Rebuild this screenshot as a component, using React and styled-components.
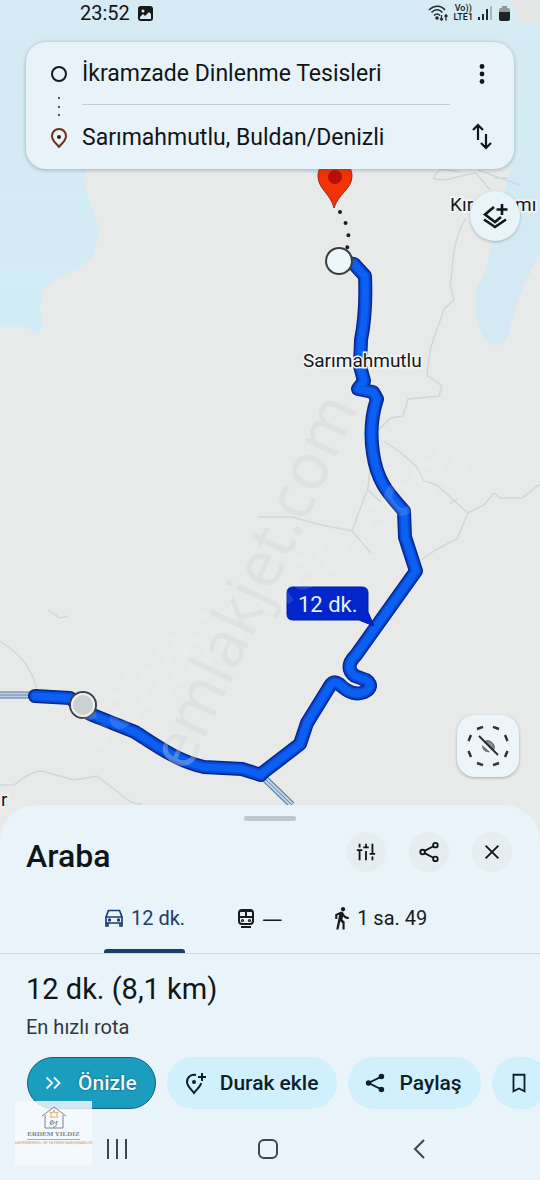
import React from 'react';
import styled, { createGlobalStyle } from 'styled-components';

const GlobalStyle = createGlobalStyle`
  * {
    box-sizing: border-box;
  }

  body {
    margin: 0;
    background: #e8f3fa;
    font-family: Roboto, 'Noto Sans', sans-serif;
    color: #111518;
  }

  button {
    border: 0;
    padding: 0;
    background: none;
    font: inherit;
    color: inherit;
    cursor: pointer;
  }

  h1, h2, p {
    margin: 0;
    font-weight: 400;
  }

  svg {
    display: block;
    flex: none;
  }
`;

const Screen = styled.div`
  display: flex;
  flex-direction: column;
  min-height: 100vh;
  overflow: hidden;
`;

const MapArea = styled.main`
  position: relative;
  flex: 1;
  display: flex;
  flex-direction: column;
  min-height: 600px;
  padding-bottom: 68px;
`;

const MapCanvas = styled.svg`
  position: absolute;
  inset: 0;
  width: 100%;
  height: 100%;
`;

const PlaceLabel = styled.text`
  font-family: Roboto, sans-serif;
  font-size: 19px;
  fill: #16181a;
  stroke: #f4f6f6;
  stroke-width: 3px;
  paint-order: stroke;
`;

const EtaLabel = styled.text`
  font-family: Roboto, sans-serif;
  font-size: 22px;
  fill: #e4f1ff;
`;

const Watermark = styled.text`
  font-family: ${({ $bold }) => ($bold ? "'Open Sans'" : "'Noto Sans'")}, sans-serif;
  font-weight: ${({ $bold }) => ($bold ? 700 : 400)};
  font-size: ${({ $size }) => $size}px;
  fill: ${({ $fill }) => $fill};
`;

const StatusBar = styled.header`
  position: relative;
  display: flex;
  justify-content: space-between;
  align-items: center;
  height: 26px;
  padding: 0 28px 0 80px;
`;

const StatusGroup = styled.div`
  display: flex;
  align-items: center;
  gap: ${({ $gap }) => $gap}px;
  font-size: 20px;
`;

const VolteMark = styled.span`
  display: flex;
  flex-direction: column;
  align-items: center;
  font-size: 9px;
  font-weight: 500;
  line-height: 9px;
`;

const DirectionsCard = styled.section`
  position: relative;
  display: grid;
  grid-template-columns: 18px 1fr 32px;
  grid-template-rows: 63px 64px;
  column-gap: 14px;
  align-items: center;
  margin: 16px 26px 0;
  padding: 0 16px 0 24px;
  height: 127px;
  border-radius: 20px;
  background: #e8f3f9;
  box-shadow: 0 1px 4px rgba(40, 70, 90, 0.35);
`;

const RouteMarks = styled.div`
  grid-row: 1 / 3;
`;

const Place = styled.button`
  align-self: stretch;
  margin-right: 2px;
  text-align: left;
  font-size: 23px;
  border-bottom: ${({ $divided }) => ($divided ? '1px solid #c3cbd0' : '0')};
`;

const CardAction = styled.button`
  display: flex;
  align-items: center;
  justify-content: center;
  height: 40px;
`;

const LayersButton = styled.button`
  position: relative;
  display: flex;
  align-items: center;
  justify-content: center;
  align-self: flex-end;
  width: 50px;
  height: 50px;
  margin: 22px 20px 0 0;
  border-radius: 50%;
  background: #e9f4f9;
  box-shadow: 0 1px 3px rgba(60, 80, 90, 0.35);
`;

const LocateButton = styled.button`
  position: relative;
  display: flex;
  align-items: center;
  justify-content: center;
  align-self: flex-end;
  width: 62px;
  height: 62px;
  margin: auto 21px 0 0;
  border-radius: 18px;
  background: #edf5f9;
  box-shadow: 0 1px 3px rgba(60, 80, 90, 0.4);
`;

const Sheet = styled.section`
  position: relative;
  margin-top: -40px;
  border-radius: 36px 36px 0 0;
  background: #e8f3fa;
`;

const Handle = styled.div`
  width: 52px;
  height: 5px;
  margin: 0 auto;
  border-radius: 2px;
  background: #bfc9cf;
`;

const SheetTop = styled.div`
  padding-top: 11px;
`;

const SheetHeader = styled.header`
  display: flex;
  align-items: center;
  justify-content: space-between;
  height: 62px;
  padding: 0 28px 0 26px;
`;

const SheetTitle = styled.h1`
  padding-top: 8px;
  font-size: 32px;
  line-height: 38px;
  font-weight: 500;
`;

const HeaderActions = styled.div`
  display: flex;
  gap: 23px;
`;

const RoundButton = styled.button`
  display: flex;
  align-items: center;
  justify-content: center;
  width: 40px;
  height: 40px;
  border-radius: 50%;
  background: #e5edf1;
`;

const ModeTabs = styled.nav`
  display: flex;
  gap: 52px;
  height: 71px;
  padding: 0 104px;
  border-bottom: 1px solid #ccd8e0;
`;

const ModeTab = styled.button`
  display: flex;
  flex-direction: column;
  font-size: 20px;
  white-space: nowrap;
  color: ${({ $active }) => ($active ? '#1b3f6b' : '#171b1e')};

  &::after {
    content: '';
    width: 100%;
    height: 4px;
    border-radius: 3px 3px 0 0;
    background: ${({ $active }) => ($active ? '#1a4069' : 'transparent')};
  }
`;

const ModeLabel = styled.span`
  display: flex;
  flex: 1;
  align-items: center;
  gap: 7px;
  padding-top: 4px;
`;

const NoTime = styled.span`
  font-family: 'Noto Sans', sans-serif;
`;

const Summary = styled.div`
  padding: 16px 26px 0;
`;

const Duration = styled.h2`
  font-size: 29px;
  line-height: 38px;
`;

const RouteNote = styled.p`
  margin-top: 6px;
  font-size: 20px;
  line-height: 26px;
  color: #33383c;
`;

const ActionRow = styled.div`
  display: flex;
  gap: 11px;
  margin-top: 17px;
  padding-left: 27px;
  overflow: hidden;
`;

const Pill = styled.button`
  display: flex;
  flex: none;
  align-items: center;
  gap: 13px;
  height: 52px;
  padding: 0 18px 0 15px;
  border: 1px solid ${({ $primary }) => ($primary ? '#155e7c' : 'transparent')};
  border-radius: 26px;
  background: ${({ $primary }) => ($primary ? '#1b9dc0' : '#d0f0fd')};
  color: ${({ $primary }) => ($primary ? '#eefaff' : '#0f1e28')};
  font-size: 21px;
  font-weight: 500;
  text-shadow: ${({ $primary }) => ($primary ? '0 0 2px #0b3c55' : 'none')};
`;

const SystemNav = styled.nav`
  position: relative;
  display: flex;
  justify-content: center;
  gap: 119px;
  height: 71px;
  padding: 24px 4px 0 0;
`;

const NavButton = styled.button`
  display: flex;
  align-items: center;
  justify-content: center;
  width: 32px;
  height: 32px;
  color: #3f4549;
`;

const AgencyBadge = styled.div`
  position: absolute;
  left: 15px;
  bottom: 15px;
  display: flex;
  flex-direction: column;
  align-items: center;
  width: 77px;
  height: 64px;
  padding-top: 5px;
  background: rgba(247, 250, 254, 0.82);
`;

const AgencyName = styled.span`
  font-family: 'Liberation Serif', serif;
  font-size: 7px;
  line-height: 10px;
  font-weight: 700;
  color: #7d858b;
  border-bottom: 1px solid #a8acae;
`;

const AgencyLine = styled.span`
  font-size: 4px;
  line-height: 6px;
  color: #e0936a;
  white-space: nowrap;
`;

const routeNorth =
  'M339 261 L354 264 L365 276 C366 300 364 325 361 340 L360 366 L364 381 L358 389 L373 392 L377 399 C370 420 371 440 373 453 C377 482 389 494 404 511 L405 537 L416 571 L356 655 C347 664 348 671 355 676 L366 680 C374 685 369 691 361 693 C351 695 345 689 339 684 C333 680 331 684 328 689 L307 723 L300 744 L261 774';
const routeSouth = 'M261 775 L242 769 L204 767 C177 761 157 746 135 732 L90 714 L70 698 L35 696';

const RouteMap = () => (
  <MapCanvas viewBox="0 0 540 845" preserveAspectRatio="xMidYMin slice" role="img" aria-label="Rota haritası">
    <defs>
      <linearGradient id="sky" x1="0" y1="0" x2="0" y2="1">
        <stop offset="0" stopColor="#d6ebf3" />
        <stop offset="1" stopColor="#d2ecf5" />
      </linearGradient>
    </defs>
    <rect width="540" height="845" fill="#e8eae9" />
    {/* lakes */}
    <path d="M0 0 H540 V168 H337 C325 178 311 174 299 169 H86 L84 182 L90 202 L100 230 L94 256 L80 268 L54 280 L42 292 L40 308 L43 328 L34 334 L28 327 H0 Z" fill="url(#sky)" />
    <path d="M514 160 H540 V252 C528 279 518 293 511 325 C507 346 498 350 486 341 C477 329 472 304 478 285 C488 272 492 245 496 216 Z" fill="#d3eaf4" />
    <path d="M510 0 H540 V23 H520 Z" fill="#e6e8e8" />
    {/* minor roads */}
    <g fill="none" stroke="#d0d7db" strokeWidth="1.400">
      <path d="M433 178 C445 184 465 173 476 173 L490 190 M433 178 L440 169 L460 172 M494 178 H508 M478 170 L520 185" />
      <path d="M466 218 C450 244 454 268 450 285 L454 300 L444 309 L430 350 L427 375 L442 386 L439 396 L408 399 L403 416 L391 418 L378 430" />
      <path d="M384 441 L400 452 L416 466 L424 481 L437 485 L468 513 L484 505 L494 493 L500 498 L522 498 L540 484" />
      <path d="M468 513 L457 539 L437 549 L421 560 M450 504 L457 499" />
      <path d="M258 517 L292 517 L321 525 L352 531 L368 488 L371 460 M352 531 L371 553 M368 490 L381 502" />
      <path d="M0 641 C23 656 32 669 37 690 M48 610 L60 618 L68 616" />
      <path d="M0 785 H14 C25 776 35 771 42 771 L74 780 L97 776 L119 793 C129 802 134 804 142 804" />
    </g>
    <g fill="none">
      <path d="M0 695 H36 M261 775 L292 805" stroke="#5c7594" strokeWidth="7" />
      <path d="M0 695 H36 M261 775 L292 805" stroke="#b8d0e8" strokeWidth="5" />
      <path d="M0 695 H36 M261 775 L292 805" stroke="#6f89a5" strokeWidth="1" />
    </g>
    {/* route */}
    <g fill="none" strokeLinejoin="round" strokeLinecap="round">
      <path d={routeSouth} stroke="#06268c" strokeWidth="14" />
      <path d={routeNorth} stroke="#06268c" strokeWidth="14" />
      <path d={routeSouth} stroke="#084bd6" strokeWidth="11" />
      <path d={routeNorth} stroke="#084bd6" strokeWidth="11" />
      <path d={routeSouth} stroke="#0b60f2" strokeWidth="7" />
      <path d={routeNorth} stroke="#0b60f2" strokeWidth="7" />
    </g>
    <path d="M340 212 L346 224 L349 238 L347 249" fill="none" stroke="#1b1d1f" strokeWidth="4" strokeLinecap="round" strokeDasharray="0 12.4" />
    <path d="M334 208 C331 194 318 189 318 176 A17 17 0 0 1 352 176 C352 189 338 194 334 208 Z" fill="#f23307" stroke="#8d2c18" strokeWidth="1" />
    <circle cx="335" cy="177" r="7" fill="#b80d08" />
    <circle cx="339" cy="261" r="13" fill="#edf7fa" stroke="#383d40" strokeWidth="2" />
    <circle cx="83" cy="705" r="13" fill="#cdd0d2" stroke="#3e4245" strokeWidth="2" />
    <circle cx="83" cy="705" r="11" fill="none" stroke="#eceeef" strokeWidth="2" />
    <path d="M293 587 H362 Q368 587 368 593 V612 L374 626 L359 620 H293 Q287 620 287 614 V593 Q287 587 293 587 Z" fill="#0325cc" stroke="#041a98" strokeWidth="1" />
    <EtaLabel x="298" y="612">12 dk.</EtaLabel>
    <PlaceLabel x="303" y="367">Sarımahmutlu</PlaceLabel>
    <PlaceLabel x="450" y="211">Kır</PlaceLabel>
    <PlaceLabel x="515" y="211">mı</PlaceLabel>
    <PlaceLabel x="1" y="806">r</PlaceLabel>
    <Watermark $bold $size={60} $fill="rgba(255,255,255,0.12)" transform="translate(92 752) rotate(-37)">sahibinden.com</Watermark>
    <Watermark $size={64} $fill="rgba(205,210,212,0.34)" transform="translate(188 774) rotate(-65)">emlakjet.com</Watermark>
  </MapCanvas>
);

const StrokeIcon = ({ size = 24, width = 2, children }) => (
  <svg width={size} height={size} viewBox="0 0 24 24" fill="none" stroke="currentColor" strokeWidth={width} aria-hidden="true">
    {children}
  </svg>
);

const App = () => (
  <>
    <GlobalStyle />
    <Screen>
      <MapArea>
        <RouteMap />
        <StatusBar>
          <StatusGroup $gap={8}>
            <span>23:52</span>
            <svg width="15" height="15" viewBox="0 0 15 15" aria-hidden="true">
              <rect width="15" height="15" rx="3" fill="#15191b" />
              <path d="M2 11 L5 8 L7 10 L11 6 L13 8 V13 H2 Z" fill="#d6ebf3" />
              <circle cx="5" cy="5" r="1.5" fill="#d6ebf3" />
            </svg>
          </StatusGroup>
          <StatusGroup $gap={5}>
            <svg width="21" height="17" viewBox="0 0 21 17" fill="none" stroke="#22282b" strokeWidth="1.6" aria-hidden="true">
              <path d="M1 5 C6 0 13 0 17 5 M3.500 7.500 C7 4 11 4 14.500 7.500 M6 10.500 C8 8.500 10 8.500 12 10.500" />
              <circle cx="9" cy="13" r="1" fill="#22282b" />
              <path d="M13.500 10 V15 M12 13.500 L13.500 15.300 L15 13.500 M18 15.500 V10 M16.500 11.500 L18 9.700 L19.500 11.500" strokeWidth="1.300" />
            </svg>
            <VolteMark>
              <span>Vo))</span>
              <span>LTE1</span>
            </VolteMark>
            <svg width="14" height="16" viewBox="0 0 14 16" aria-hidden="true">
              <path d="M1 12 V15 M5 9 V15 M9 4 V15" stroke="#22282b" strokeWidth="2" />
              <path d="M13 1 V15" stroke="#96a5ac" strokeWidth="1.500" />
            </svg>
            <svg width="15" height="17" viewBox="0 0 15 17" aria-hidden="true">
              <path d="M5 3 V1 H10 V3 H11 Q13 3 13 5 V8 H2 V5 Q2 3 4 3 Z" fill="#8f989b" />
              <path d="M2 7 H13 V14 Q13 16 11 16 H4 Q2 16 2 14 Z" fill="#1e2326" />
            </svg>
          </StatusGroup>
        </StatusBar>

        <DirectionsCard>
          <RouteMarks>
            <svg width="18" height="84" viewBox="0 0 18 84" fill="none" aria-hidden="true">
              <circle cx="9" cy="10" r="7" stroke="#171a1c" strokeWidth="2" />
              <path d="M9 33 v2 M9 42 v2 M9 50 v2" stroke="#4e5659" strokeWidth="2" />
              <path d="M9 83 C6 79 2 77 2 72 A7 7 0 0 1 16 72 C16 77 12 79 9 83 Z" stroke="#6b2f1d" strokeWidth="2" />
              <circle cx="9" cy="73" r="2" fill="#3f170d" />
            </svg>
          </RouteMarks>
          <Place $divided>İkramzade Dinlenme Tesisleri</Place>
          <CardAction aria-label="Diğer seçenekler">
            <svg width="24" height="24" viewBox="0 0 24 24" fill="#111518" aria-hidden="true">
              <circle cx="12" cy="4.500" r="2.400" />
              <circle cx="12" cy="12" r="2.400" />
              <circle cx="12" cy="19.500" r="2.400" />
            </svg>
          </CardAction>
          <Place>Sarımahmutlu, Buldan/Denizli</Place>
          <CardAction aria-label="Yönü değiştir">
            <svg width="24" height="28" viewBox="0 0 24 28" fill="none" stroke="#111518" strokeWidth="2.200" aria-hidden="true">
              <path d="M8 17 V2 M3 7 L8 2 L13 7 M16 11 V25 M11 20 L16 25 L21 20" />
            </svg>
          </CardAction>
        </DirectionsCard>

        <LayersButton aria-label="Katmanlar">
          <svg width="28" height="28" viewBox="0 0 28 28" fill="none" stroke="#111518" strokeWidth="2.600" aria-hidden="true">
            <path d="M13 5 L4 12.500 L14 20 L20 15 M3 17.500 L14 25 L25 17.500 M21 2 V13 M15.500 7.500 H26.500" />
          </svg>
        </LayersButton>
        <LocateButton aria-label="Konumum">
          <svg width="42" height="42" viewBox="0 0 42 42" fill="none" stroke="#2b2f32" aria-hidden="true">
            <g strokeWidth="2.400">
              <path d="M10 4 L16 1.800 M26 1.800 L32 4 M38 10 L40.500 16 M40.500 26 L38 32 M32 38 L26 40.200 M16 40.200 L10 38 M4 32 L1.500 26 M1.500 16 L4 10" />
            </g>
            <path d="M17 17 A6.500 6.500 0 0 1 26 26 Z" fill="#8a8e90" stroke="#4b5053" strokeWidth="1" />
            <path d="M15 20 A6.500 6.500 0 0 0 23 27 Z" fill="#6d7274" stroke="none" />
            <path d="M12 11 L31 30" strokeWidth="2" />
          </svg>
        </LocateButton>
      </MapArea>

      <Sheet>
        <SheetTop>
          <Handle />
        </SheetTop>
        <SheetHeader>
          <SheetTitle>Araba</SheetTitle>
          <HeaderActions>
            <RoundButton aria-label="Rota seçenekleri">
              <StrokeIcon size={22}>
                <path d="M5 3 V7 M2 10 H8 M5 10 V21 M12 3 V7 M9 7 H15 M12 11 V21 M19 3 V14 M16 14 H22 M19 17 V21" />
              </StrokeIcon>
            </RoundButton>
            <RoundButton aria-label="Paylaş">
              <StrokeIcon size={22}>
                <circle cx="5" cy="12" r="2.500" />
                <circle cx="19" cy="4.500" r="2.500" />
                <circle cx="19" cy="19.500" r="2.500" />
                <path d="M7.200 10.800 L16.800 5.700 M7.200 13.200 L16.800 18.300" />
              </StrokeIcon>
            </RoundButton>
            <RoundButton aria-label="Kapat">
              <StrokeIcon size={22}>
                <path d="M5 5 L19 19 M19 5 L5 19" />
              </StrokeIcon>
            </RoundButton>
          </HeaderActions>
        </SheetHeader>

        <ModeTabs aria-label="Ulaşım türü">
          <ModeTab $active>
            <ModeLabel>
              <svg width="20" height="20" viewBox="0 0 20 20" fill="none" stroke="currentColor" strokeWidth="1.700" aria-hidden="true">
                <path d="M2 9 L4.500 2.500 H15.500 L18 9 V15 H2 Z M2 9 H18 M2 15 V18 H4 V15 M18 15 V18 H16 V15" />
                <circle cx="5.500" cy="12" r="0.800" />
                <circle cx="14.500" cy="12" r="0.800" />
              </svg>
              12 dk.
            </ModeLabel>
          </ModeTab>
          <ModeTab>
            <ModeLabel>
              <svg width="18" height="20" viewBox="0 0 18 20" fill="none" stroke="currentColor" strokeWidth="2" aria-hidden="true">
                <path d="M2 5 Q2 2 5 2 H13 Q16 2 16 5 V13 Q16 16 13 16 H5 Q2 16 2 13 Z M3 3 H15" />
                <path d="M2 9 H16 M9 3 V9 M4 19 H14" />
                <circle cx="5.500" cy="12.500" r="0.600" />
                <circle cx="12.500" cy="12.500" r="0.600" />
              </svg>
              <NoTime>—</NoTime>
            </ModeLabel>
          </ModeTab>
          <ModeTab>
            <ModeLabel>
              <svg width="16" height="24" viewBox="5 0.500 15 23" fill="currentColor" aria-hidden="true">
                <path d="M13.500 5.500c1.100 0 2-.9 2-2s-.9-2-2-2-2 .9-2 2 .9 2 2 2zM9.800 8.900L7 23h2.100l1.800-8 2.100 2v6h2v-7.500l-2.100-2 .6-3C14.800 12 16.800 13 19 13v-2c-1.900 0-3.500-1-4.300-2.400l-1-1.600c-.4-.6-1-1-1.700-1-.3 0-.5.1-.8.1L6 8.300V13h2V9.600l1.800-.7" />
              </svg>
              1 sa. 49
            </ModeLabel>
          </ModeTab>
        </ModeTabs>

        <Summary>
          <Duration>12 dk. (8,1 km)</Duration>
          <RouteNote>En hızlı rota</RouteNote>
        </Summary>

        <ActionRow>
          <Pill $primary>
            <StrokeIcon size={22}>
              <path d="M4 6 L10 12 L4 18 M12 6 L18 12 L12 18" />
            </StrokeIcon>
            Önizle
          </Pill>
          <Pill>
            <StrokeIcon size={24}>
              <path d="M13 4 C8 3 4 6 4 11 C4 15 8 18 11 22 C14 18 18 15 18 12 M19 2 V10 M15 6 H23" />
              <circle cx="11" cy="11" r="1" fill="currentColor" />
            </StrokeIcon>
            Durak ekle
          </Pill>
          <Pill>
            <StrokeIcon size={22}>
              <path d="M19 5 L5 12 L19 19" />
              <g fill="currentColor" stroke="none">
                <circle cx="5" cy="12" r="3" />
                <circle cx="19" cy="5" r="3" />
                <circle cx="19" cy="19" r="3" />
              </g>
            </StrokeIcon>
            Paylaş
          </Pill>
          <Pill aria-label="Kaydet">
            <StrokeIcon size={22}>
              <path d="M6 3 H18 V21 L12 18 L6 21 Z" />
            </StrokeIcon>
          </Pill>
        </ActionRow>

        <SystemNav aria-label="Sistem gezinmesi">
          <NavButton aria-label="Son uygulamalar">
            <StrokeIcon size={24}>
              <path d="M3 2 V22 M12 2 V22 M21 2 V22" />
            </StrokeIcon>
          </NavButton>
          <NavButton aria-label="Ana ekran">
            <StrokeIcon size={24}>
              <rect x="3" y="3" width="18" height="18" rx="5" />
            </StrokeIcon>
          </NavButton>
          <NavButton aria-label="Geri">
            <StrokeIcon size={24}>
              <path d="M17 3 L8 12 L17 21" />
            </StrokeIcon>
          </NavButton>
          <AgencyBadge>
            <svg width="26" height="23" viewBox="0 0 26 23" fill="none" stroke="#7f888e" strokeWidth="1" aria-hidden="true">
              <path d="M1 10 L13 1 L25 10 M4 9 V22 H22 V9" />
              <path d="M13 4 L14 7 L17 6 L15.500 9 L17 11 L13 11 L9 11 L10.500 9 L9 6 L12 7 Z" stroke="#e0b072" />
              <path d="M9 18 C13 16 12 13 10 15 C8 18 10 20 13 17 M13 15 C13 18 15 18 16 15 C16 19 14 22 12 21" />
            </svg>
            <AgencyName>ERDEM YILDIZ</AgencyName>
            <AgencyLine>GAYRİMENKUL VE YATIRIM DANIŞMANLIĞI</AgencyLine>
          </AgencyBadge>
        </SystemNav>
      </Sheet>
    </Screen>
  </>
);

export default App;
